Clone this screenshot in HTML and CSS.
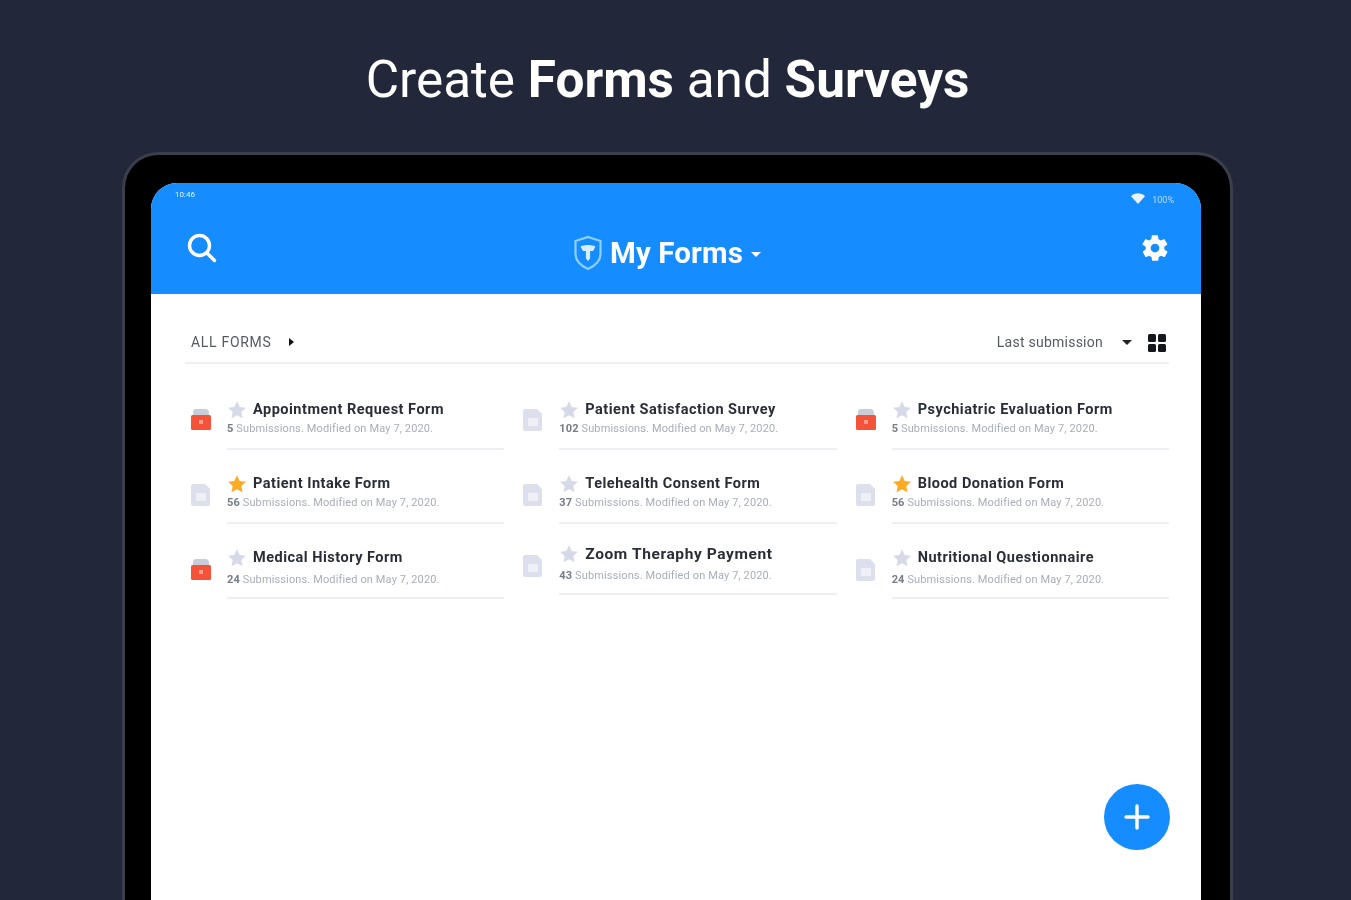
FILE: index.html
```html
<!DOCTYPE html>
<html lang="en">
<head>
  <meta charset="UTF-8" />
  <meta name="viewport" content="width=device-width, initial-scale=1.0"/>
  <title>Create Forms and Surveys</title>
  <link rel="stylesheet" href="styles.css">
</head>
<body>
  <svg class="sprites" width="0" height="0">
    <symbol id="star" viewBox="0 0 24 24">
      <path d="M12 1.500l3.200 6.900 7.500.9-5.500 5.200 1.400 7.500-6.600-3.700-6.600 3.700 1.400-7.500L1.300 9.300l7.500-.9z"/>
    </symbol>
    <symbol id="doc" viewBox="0 0 22 24">
      <path d="M3 1h12l5 5v15a2 2 0 0 1-2 2H3a2 2 0 0 1-2-2V3a2 2 0 0 1 2-2z" fill="#dde0ec"/>
      <rect x="6" y="10" width="10" height="8" fill="#eef0f6"/>
    </symbol>
    <symbol id="card" viewBox="0 0 22 24">
      <path d="M3 8V4a3 3 0 0 1 3-3h9a4 4 0 0 1 4 3v4z" fill="#c9cdd9"/>
      <rect x="1" y="7" width="20" height="15" rx="1.500" fill="#f4533a"/>
      <rect x="9" y="12" width="4" height="4" fill="#fb9d8c"/>
    </symbol>
  </svg>

  <h1 class="headline">Create <b>Forms</b> and <b>Surveys</b></h1>

  <div class="device">
    <div class="screen">
      <header class="appbar">
        <div class="status">
          <span class="clock">10:46</span>
          <span class="signal">
            <svg width="14" height="11" viewBox="0 0 14 11"><path d="M0 3.200C3.800-.6 10.200-.6 14 3.200L7 11z" fill="#fff"/></svg>
            <span class="battery">100%</span>
          </span>
        </div>
        <div class="bar">
          <svg class="search" width="30" height="30" viewBox="0 0 30 30" fill="none" stroke="#fff" stroke-width="3.400" stroke-linecap="round">
            <circle cx="12.500" cy="12.500" r="10"/>
            <path d="M20 20l7.500 7.500"/>
          </svg>
          <div class="brand">
            <svg width="30" height="36" viewBox="0 0 30 36">
              <path d="M15 2l12.500 4v13c0 7-5 11.500-12.500 15C7.500 30.500 2.500 26 2.500 19V6z" fill="none" stroke="#8fd0ff" stroke-width="2.200"/>
              <path d="M7.500 11.500c4.500-2 10.500-2 15 0l-2.400 4.500h-3v7.500L15 26l-2.100-2.500V16h-3z" fill="#d5eeff"/>
            </svg>
            <span class="brand-name">My Forms</span>
            <span class="caret"></span>
          </div>
          <svg class="gear" width="30" height="30" viewBox="0 0 24 24">
            <path fill="#fff" d="M19.400 13a7.500 7.500 0 0 0 0-2l2.200-1.700a.5.5 0 0 0 .1-.7l-2-3.500a.5.5 0 0 0-.6-.2l-2.600 1a7.600 7.600 0 0 0-1.700-1l-.4-2.700a.5.5 0 0 0-.5-.4h-4a.5.5 0 0 0-.5.4l-.4 2.700a7.600 7.600 0 0 0-1.700 1l-2.600-1a.5.5 0 0 0-.6.2l-2 3.500a.5.5 0 0 0 .1.7L4.600 11a7.500 7.500 0 0 0 0 2l-2.200 1.700a.5.5 0 0 0-.1.7l2 3.500a.5.5 0 0 0 .6.2l2.600-1a7.600 7.600 0 0 0 1.700 1l.4 2.700a.5.5 0 0 0 .5.4h4a.5.5 0 0 0 .5-.4l.4-2.700a7.600 7.600 0 0 0 1.700-1l2.600 1a.5.5 0 0 0 .6-.2l2-3.500a.5.5 0 0 0-.1-.7zM12 15.500a3.500 3.500 0 1 1 0-7 3.500 3.500 0 0 1 0 7z"/>
          </svg>
        </div>
      </header>

      <main class="content">
        <div class="toolbar">
          <div class="filter">
            <span>ALL FORMS</span>
            <span class="tri-right"></span>
          </div>
          <div class="sort">
            <span>Last submission</span>
            <span class="tri-down"></span>
            <span class="grid-icon"><i></i><i></i><i></i><i></i></span>
          </div>
        </div>

        <div class="forms">
          <div class="form">
            <svg class="form-icon"><use href="#card"/></svg>
            <div class="form-body">
              <div class="form-title"><svg class="star"><use href="#star"/></svg>Appointment Request Form</div>
              <div class="form-meta"><b>5</b> Submissions. Modified on May 7, 2020.</div>
            </div>
          </div>
          <div class="form">
            <svg class="form-icon"><use href="#doc"/></svg>
            <div class="form-body">
              <div class="form-title"><svg class="star"><use href="#star"/></svg>Patient Satisfaction Survey</div>
              <div class="form-meta"><b>102</b> Submissions. Modified on May 7, 2020.</div>
            </div>
          </div>
          <div class="form">
            <svg class="form-icon"><use href="#card"/></svg>
            <div class="form-body">
              <div class="form-title"><svg class="star"><use href="#star"/></svg>Psychiatric Evaluation Form</div>
              <div class="form-meta"><b>5</b> Submissions. Modified on May 7, 2020.</div>
            </div>
          </div>

          <div class="form">
            <svg class="form-icon"><use href="#doc"/></svg>
            <div class="form-body">
              <div class="form-title"><svg class="star on"><use href="#star"/></svg>Patient Intake Form</div>
              <div class="form-meta"><b>56</b> Submissions. Modified on May 7, 2020.</div>
            </div>
          </div>
          <div class="form">
            <svg class="form-icon"><use href="#doc"/></svg>
            <div class="form-body">
              <div class="form-title"><svg class="star"><use href="#star"/></svg>Telehealth Consent Form</div>
              <div class="form-meta"><b>37</b> Submissions. Modified on May 7, 2020.</div>
            </div>
          </div>
          <div class="form">
            <svg class="form-icon"><use href="#doc"/></svg>
            <div class="form-body">
              <div class="form-title"><svg class="star on"><use href="#star"/></svg>Blood Donation Form</div>
              <div class="form-meta"><b>56</b> Submissions. Modified on May 7, 2020.</div>
            </div>
          </div>

          <div class="form">
            <svg class="form-icon"><use href="#card"/></svg>
            <div class="form-body">
              <div class="form-title"><svg class="star"><use href="#star"/></svg>Medical History Form</div>
              <div class="form-meta"><b>24</b> Submissions. Modified on May 7, 2020.</div>
            </div>
          </div>
          <div class="form form-raised">
            <svg class="form-icon"><use href="#doc"/></svg>
            <div class="form-body">
              <div class="form-title"><svg class="star"><use href="#star"/></svg>Zoom Theraphy Payment</div>
              <div class="form-meta"><b>43</b> Submissions. Modified on May 7, 2020.</div>
            </div>
          </div>
          <div class="form">
            <svg class="form-icon"><use href="#doc"/></svg>
            <div class="form-body">
              <div class="form-title"><svg class="star"><use href="#star"/></svg>Nutritional Questionnaire</div>
              <div class="form-meta"><b>24</b> Submissions. Modified on May 7, 2020.</div>
            </div>
          </div>
        </div>
      </main>

      <button class="fab" type="button" aria-label="Add form">
        <svg width="28" height="28" viewBox="0 0 28 28"><path d="M14 3v22M3 14h22" stroke="#fff" stroke-width="3.400" stroke-linecap="round"/></svg>
      </button>
    </div>
  </div>
</body>
</html>
```

FILE: styles.css
```css
:root {
  --page-bg: #222839;
  --blue: #158cff;
  --line: #eeeff2;
  --star: #d6d9e8;
  --star-on: #fdaa25;
}

* {
  box-sizing: border-box;
}

html, body {
  height: 100%;
}

body {
  margin: 0;
  background: var(--page-bg);
  font-family: Roboto, 'Liberation Sans', sans-serif;
  overflow: hidden;
}

.sprites {
  position: absolute;
}

.headline {
  margin: 0;
  padding-top: 51px;
  height: 152px;
  text-align: center;
  color: #fff;
  font-size: 51.3px;
  line-height: 58px;
  font-weight: 400;
  transform: translateX(-8px);
  filter: blur(0.6px);
}

.device {
  width: 1111px;
  height: 748px;
  margin-left: 122px;
  padding: 28px 29px 0 26px;
  background: #000;
  border: 3px solid #3b3f4b;
  border-bottom: 0;
  border-radius: 36px 36px 0 0;
}

.screen {
  position: relative;
  height: 100%;
  background: #fff;
  border-radius: 26px 26px 0 0;
  overflow: hidden;
}

/* app bar */
.appbar {
  height: 111px;
  padding: 0 27px 0 24px;
  background: var(--blue);
  color: #fff;
  filter: blur(0.6px);
}

.status {
  display: flex;
  justify-content: space-between;
  height: 30px;
  font-size: 8px;
  opacity: 0.9;
}

.clock {
  padding-top: 7px;
}

.signal {
  display: flex;
  align-items: flex-start;
  gap: 7px;
  padding-top: 10px;
}

.battery {
  padding-top: 2px;
  font-size: 9px;
  opacity: 0.75;
}

.bar {
  display: flex;
  align-items: center;
  justify-content: space-between;
  padding: 0 4px 0 12px;
  height: 62px;
}

.brand {
  display: flex;
  align-items: center;
  gap: 7px;
  margin: 18px 23px 0 0;
}

.brand-name {
  font-size: 29.5px;
  font-weight: 700;
  letter-spacing: 0.1px;
}

.caret {
  margin: 2px 0 0 1px;
  border-style: solid;
  border-width: 5px 5px 0;
  border-color: #fff transparent transparent;
}

.search, .gear {
  margin-top: 8px;
}

/* list */
.content {
  padding: 0 32px 0 34px;
}

.toolbar {
  display: flex;
  justify-content: space-between;
  align-items: center;
  height: 70px;
  padding: 28px 3px 0 6px;
  border-bottom: 2px solid var(--line);
  color: #555a63;
  font-size: 14px;
  filter: blur(0.7px);
}

.filter, .sort {
  display: flex;
  align-items: center;
}

.filter {
  letter-spacing: 0.7px;
}

.sort {
  letter-spacing: 0.25px;
}

.tri-right {
  margin-left: 17px;
  border-style: solid;
  border-width: 4px 0 4px 5px;
  border-color: transparent transparent transparent #111;
}

.tri-down {
  margin: 0 16px 0 19px;
  border-style: solid;
  border-width: 5px 5px 0;
  border-color: #222 transparent transparent;
}

.grid-icon {
  display: grid;
  grid-template-columns: 8px 8px;
  gap: 2px;
  margin-top: 2px;
}

.grid-icon i {
  height: 8px;
  background: #15171c;
  border-radius: 1.5px;
}

.forms {
  display: grid;
  grid-template-columns: repeat(3, 1fr);
  column-gap: 18px;
  grid-auto-rows: 74px;
  margin-top: 32px;
  margin-left: 5px;
  filter: blur(0.75px);
}

.form {
  display: flex;
  align-items: flex-start;
  gap: 15px;
  min-width: 0;
}

.form-icon {
  flex: none;
  width: 22px;
  height: 24px;
  margin-top: 12px;
}

.form-body {
  flex: 1;
  height: 54px;
  padding-top: 2.5px;
  border-bottom: 2px solid var(--line);
}

.form-title {
  display: flex;
  align-items: center;
  gap: 6px;
  height: 22px;
  color: #2a2d38;
  font-size: 14.5px;
  font-weight: 700;
  letter-spacing: 0.5px;
  white-space: nowrap;
}

.star {
  flex: none;
  width: 20px;
  height: 20px;
  fill: var(--star);
}

.star.on {
  fill: var(--star-on);
}

.form-meta {
  margin-top: 1px;
  color: #a9adb8;
  font-size: 11px;
  letter-spacing: 0.13px;
  white-space: nowrap;
}

.form-meta b {
  color: #777b87;
}

/* the rows are not quite even in the reference */
.form:nth-child(n+4) .form-icon {
  margin-top: 13px;
}

.form:nth-child(n+7) .form-icon {
  margin-top: 14px;
}

.form:nth-child(n+7) .form-body {
  height: 55px;
}

.form:nth-child(n+7) .form-meta {
  margin-top: 4px;
}

.form-raised {
  margin-top: -4px;
}

.form-raised .form-title {
  font-size: 15.5px;
  letter-spacing: 0.6px;
}

.fab {
  position: absolute;
  right: 31px;
  top: 601px;
  display: flex;
  align-items: center;
  justify-content: center;
  width: 66px;
  height: 66px;
  padding: 0;
  border: 0;
  border-radius: 50%;
  background: var(--blue);
}
```
